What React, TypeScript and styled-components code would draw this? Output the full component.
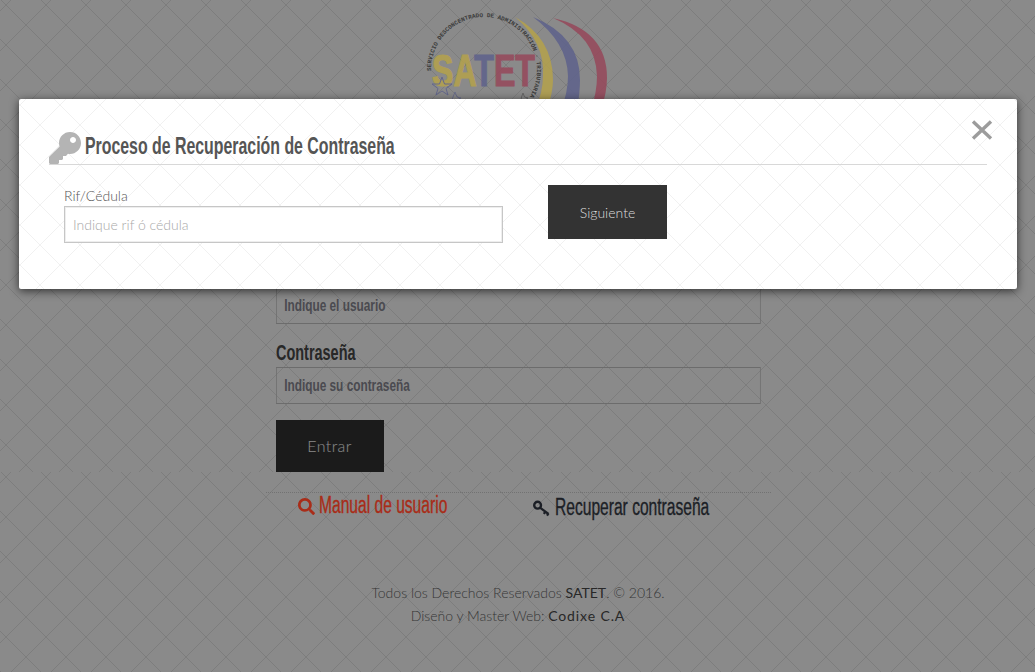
import React from "react";
import styled, { createGlobalStyle } from "styled-components";
import { FaKey, FaSearch } from "react-icons/fa";

const tile = (c: string) =>
  `url("data:image/svg+xml,%3Csvg xmlns='http://www.w3.org/2000/svg' width='40' height='40'%3E%3Cpath d='M0 0L40 40M40 0L0 40' stroke='${c}' stroke-width='1' fill='none'/%3E%3C/svg%3E")`;

const Global = createGlobalStyle`
  html, body { margin: 0; padding: 0; }
  body { font-family: "Lato", "Liberation Sans", sans-serif; background: #fff; overflow: hidden; }
  * { box-sizing: border-box; }
`;

const Sans = `"Liberation Sans", Arial, sans-serif`;

const Page = styled.div`
  position: relative;
  width: 100%;
  height: 672px;
  overflow: hidden;
  background-color: #fff;
  background-image: ${tile("%23e8e8e8")};
  background-position: 6px 5px;
  display: flex;
  flex-direction: column;
  align-items: center;
`;

const Overlay = styled.div`
  position: absolute;
  inset: 0;
  z-index: 1;
  background: rgba(0, 0, 0, 0.46);
`;

const LogoArea = styled.div`
  position: relative;
  z-index: 2;
  width: 100%;
  height: 260px;
  display: flex;
  justify-content: center;
  opacity: 0.85;
`;

const Form = styled.form`
  width: 485px;
  margin-left: 1px;
  display: flex;
  flex-direction: column;
  align-items: flex-start;
`;

const FieldLabel = styled.label`
  display: block;
  height: 27px;
  font-family: ${Sans};
  font-weight: 700;
  font-size: 22px;
  line-height: 25px;
  color: #4a4a4a;
  transform: scaleX(0.657);
  transform-origin: left;
`;

const Field = styled.div<{ $gap: number }>`
  width: 100%;
  margin-bottom: ${(p) => p.$gap}px;
`;

const FieldInput = styled.input`
  display: block;
  width: 655px;
  height: 37px;
  padding: 1px 10px 0;
  background: transparent;
  border: 1px solid #c8c8c8;
  border-radius: 0;
  outline: none;
  font-family: ${Sans};
  font-weight: 700;
  font-size: 16px;
  transform: scaleX(0.74);
  transform-origin: left;
  &::placeholder { color: #8a8a94; opacity: 1; }
`;

const EnterButton = styled.button`
  width: 108px;
  height: 52px;
  padding: 0 0 2px;
  border: 0;
  background: #333;
  color: #fff;
  font-family: "Lato", sans-serif;
  font-size: 16px;
  font-weight: 300;
  letter-spacing: 0.4px;
`;

const BottomBand = styled.div`
  width: 100%;
  flex: 1;
  display: flex;
  flex-direction: column;
  align-items: center;
  background-color: #fff;
  background-image: ${tile("%23e8e8e8")};
  background-position: 26px 25px;
`;

const LinksRow = styled.div`
  position: relative;
  z-index: 2;
  width: 505px;
  margin-top: 20px;
  margin-left: 1px;
  padding: 0 0 0 32px;
  height: 23px;
  border-top: 1px dotted #727272;
  display: grid;
  grid-template-columns: 235px 1fr;
  align-items: center;
`;

const LinkItem = styled.a<{ $color: string; $drop?: number; $gap: number }>`
  display: flex;
  align-items: center;
  gap: ${(p) => p.$gap}px;
  color: ${(p) => p.$color};
  margin-top: ${(p) => p.$drop ?? 0}px;
  text-decoration: none;
  svg { margin-top: 2px; }
`;

const LinkText = styled.span<{ $color: string }>`
  display: inline-block;
  font-family: ${Sans};
  font-size: 23px;
  line-height: 20px;
  white-space: nowrap;
  transform: scaleX(0.678);
  transform-origin: left;
  -webkit-text-stroke: 0.35px ${(p) => p.$color};
`;

const Footer = styled.footer`
  margin-top: 66px;
  text-align: center;
  font-family: "Lato", sans-serif;
  font-weight: 300;
  font-size: 14px;
  line-height: 23px;
  color: #666;
  margin-left: 1px;
`;

const FooterStrong = styled.span`
  color: #4a4a4a;
  font-weight: 400;
`;

const FooterBrand = styled(FooterStrong)`
  letter-spacing: 0.9px;
`;

const Modal = styled.section`
  position: absolute;
  z-index: 3;
  left: 19px;
  top: 99px;
  width: 998px;
  height: 190px;
  padding: 33px 30px 0 30px;
  background-color: #fff;
  background-image: ${tile("%23f1f1f1")};
  background-position: 21px 26px;
  border-radius: 2px;
  box-shadow: 0 2px 10px rgba(0, 0, 0, 0.65);
`;

const CloseButton = styled.button`
  position: absolute;
  right: 24px;
  top: 21px;
  width: 22px;
  height: 20px;
  padding: 0;
  border: 0;
  background: none;
  display: flex;
`;

const ModalHeader = styled.header`
  display: flex;
  align-items: flex-end;
  gap: 4px;
  height: 33px;
  border-bottom: 1px solid #d8d8d8;
  color: #b4b4b4;
`;

const ModalTitle = styled.h2`
  margin: 0 0 3px;
  font-family: ${Sans};
  font-weight: 700;
  font-size: 24.5px;
  line-height: 30px;
  color: #555;
  white-space: nowrap;
  transform: scaleX(0.648);
  transform-origin: left;
`;

const ModalBody = styled.div`
  display: flex;
  align-items: flex-start;
  padding: 20px 0 0 15px;
`;

const ModalField = styled.div`
  width: 439px;
  padding-top: 1px;
`;

const ModalLabel = styled.label`
  display: block;
  font-size: 14px;
  font-weight: 300;
  line-height: 20px;
  color: #555;
`;

const ModalInput = styled.input`
  display: block;
  width: 100%;
  height: 37px;
  padding: 0 8px;
  background: #fff;
  border: 1px solid #c6c6c6;
  box-shadow: inset 0 0 0 1px #eee;
  border-radius: 0;
  outline: none;
  font-family: "Lato", sans-serif;
  font-size: 14px;
  font-weight: 300;
  &::placeholder { color: #a8a8a8; opacity: 1; }
`;

const NextButton = styled.button`
  width: 119px;
  height: 54px;
  margin-left: 45px;
  border: 0;
  background: #333;
  color: #ddd;
  font-family: "Lato", sans-serif;
  font-size: 14px;
  font-weight: 300;
`;

function Logo() {
  return (
    <svg width="200" height="120" viewBox="420 0 200 120" style={{ marginLeft: 5 }}>
      <defs>
        <path id="ring" d="M431 71 A53 53 0 1 1 529.6 97" fill="none" />
      </defs>
      <path d="M515 17 Q553 38 553 80 Q553 92 547 110 L535 110 Q543 92 543 76 Q545 42 515 17Z" fill="#b5a24b" />
      <path d="M533 17 Q580 36 580 80 Q580 92 577 110 L561 110 Q568 92 568 76 Q567 42 533 17Z" fill="#5e628c" />
      <path d="M553 18 Q607 30 607 78 Q607 92 601 110 L591 110 Q597 92 597 76 Q596 36 553 18Z" fill="#96485a" />
      <text fontFamily="Liberation Mono, monospace" fontSize="6" fill="#2e2e2e" fontWeight="700">
        <textPath href="#ring">SERVICIO DESCONCENTRADO DE ADMINISTRACIÓN · TRIBUTARIA</textPath>
      </text>
      <text x="432" y="86" fontFamily="Liberation Sans, sans-serif" fontWeight="700" fontSize="44" strokeWidth="1.2" textLength="103" lengthAdjust="spacingAndGlyphs">
        <tspan fill="#b5a24b" stroke="#b5a24b">SA</tspan>
        <tspan fill="#5e628c" stroke="#5e628c">T</tspan>
        <tspan fill="#96485a" stroke="#96485a">ET</tspan>
      </text>
      <path d="M442 77 L444.5 84 L452 84 L446 88.5 L448 95 L442 91 L436 95 L438 88.5 L432 84 L439.5 84Z" fill="none" stroke="#5e628c" strokeWidth="1" />
      <path d="M455 92 L457 97 L461 98 L457 100 L452 100 L453 97Z" fill="none" stroke="#5e628c" strokeWidth="0.8" />
      <path d="M523 93 L524.5 97 L528 98 L525 100 L521 100 L521.5 97Z" fill="none" stroke="#555" strokeWidth="0.8" />
    </svg>
  );
}

function SmallKey() {
  return (
    <svg width="17" height="17" viewBox="0 0 17 17" fill="none" stroke="currentColor">
      <circle cx="4.6" cy="5.2" r="3.4" strokeWidth="2.4" />
      <path d="M7 7.6L15.5 14M12.5 11.5L10.8 13.8M15.5 13.4L14 15.6" strokeWidth="2.2" />
    </svg>
  );
}

export default function App() {
  return (
    <>
      <Global />
      <Page>
        <LogoArea>
          <Logo />
        </LogoArea>
        <Form onSubmit={(e) => e.preventDefault()}>
          <Field $gap={16}>
            <FieldLabel htmlFor="u">Usuario</FieldLabel>
            <FieldInput id="u" placeholder="Indique el usuario" />
          </Field>
          <Field $gap={16}>
            <FieldLabel htmlFor="p">Contraseña</FieldLabel>
            <FieldInput id="p" placeholder="Indique su contraseña" />
          </Field>
          <EnterButton type="button">Entrar</EnterButton>
        </Form>
        <BottomBand>
          <LinksRow>
            <LinkItem $color="#a92c18" $gap={4} href="#">
              <FaSearch size={17} />
              <LinkText $color="#a92c18">Manual de usuario</LinkText>
            </LinkItem>
            <LinkItem $color="#1c1f26" $gap={5} $drop={4} href="#">
              <SmallKey />
              <LinkText $color="#1c1f26">Recuperar contraseña</LinkText>
            </LinkItem>
          </LinksRow>
          <Footer>
            Todos los Derechos Reservados <FooterStrong>SATET</FooterStrong>. © 2016.
            <br />
            Diseño y Master Web: <FooterBrand>Codixe C.A</FooterBrand>
          </Footer>
        </BottomBand>
        <Overlay />
        <Modal>
          <CloseButton aria-label="Cerrar" type="button">
            <svg width="22" height="20" viewBox="0 0 22 20">
              <path d="M2 1.5L20 18.5M20 1.5L2 18.5" stroke="#9c9c9c" strokeWidth="3.4" fill="none" />
            </svg>
          </CloseButton>
          <ModalHeader>
            <FaKey size={32} />
            <ModalTitle>Proceso de Recuperación de Contraseña</ModalTitle>
          </ModalHeader>
          <ModalBody>
            <ModalField>
              <ModalLabel htmlFor="r">Rif/Cédula</ModalLabel>
              <ModalInput id="r" placeholder="Indique rif ó cédula" />
            </ModalField>
            <NextButton type="button">Siguiente</NextButton>
          </ModalBody>
        </Modal>
      </Page>
    </>
  );
}
